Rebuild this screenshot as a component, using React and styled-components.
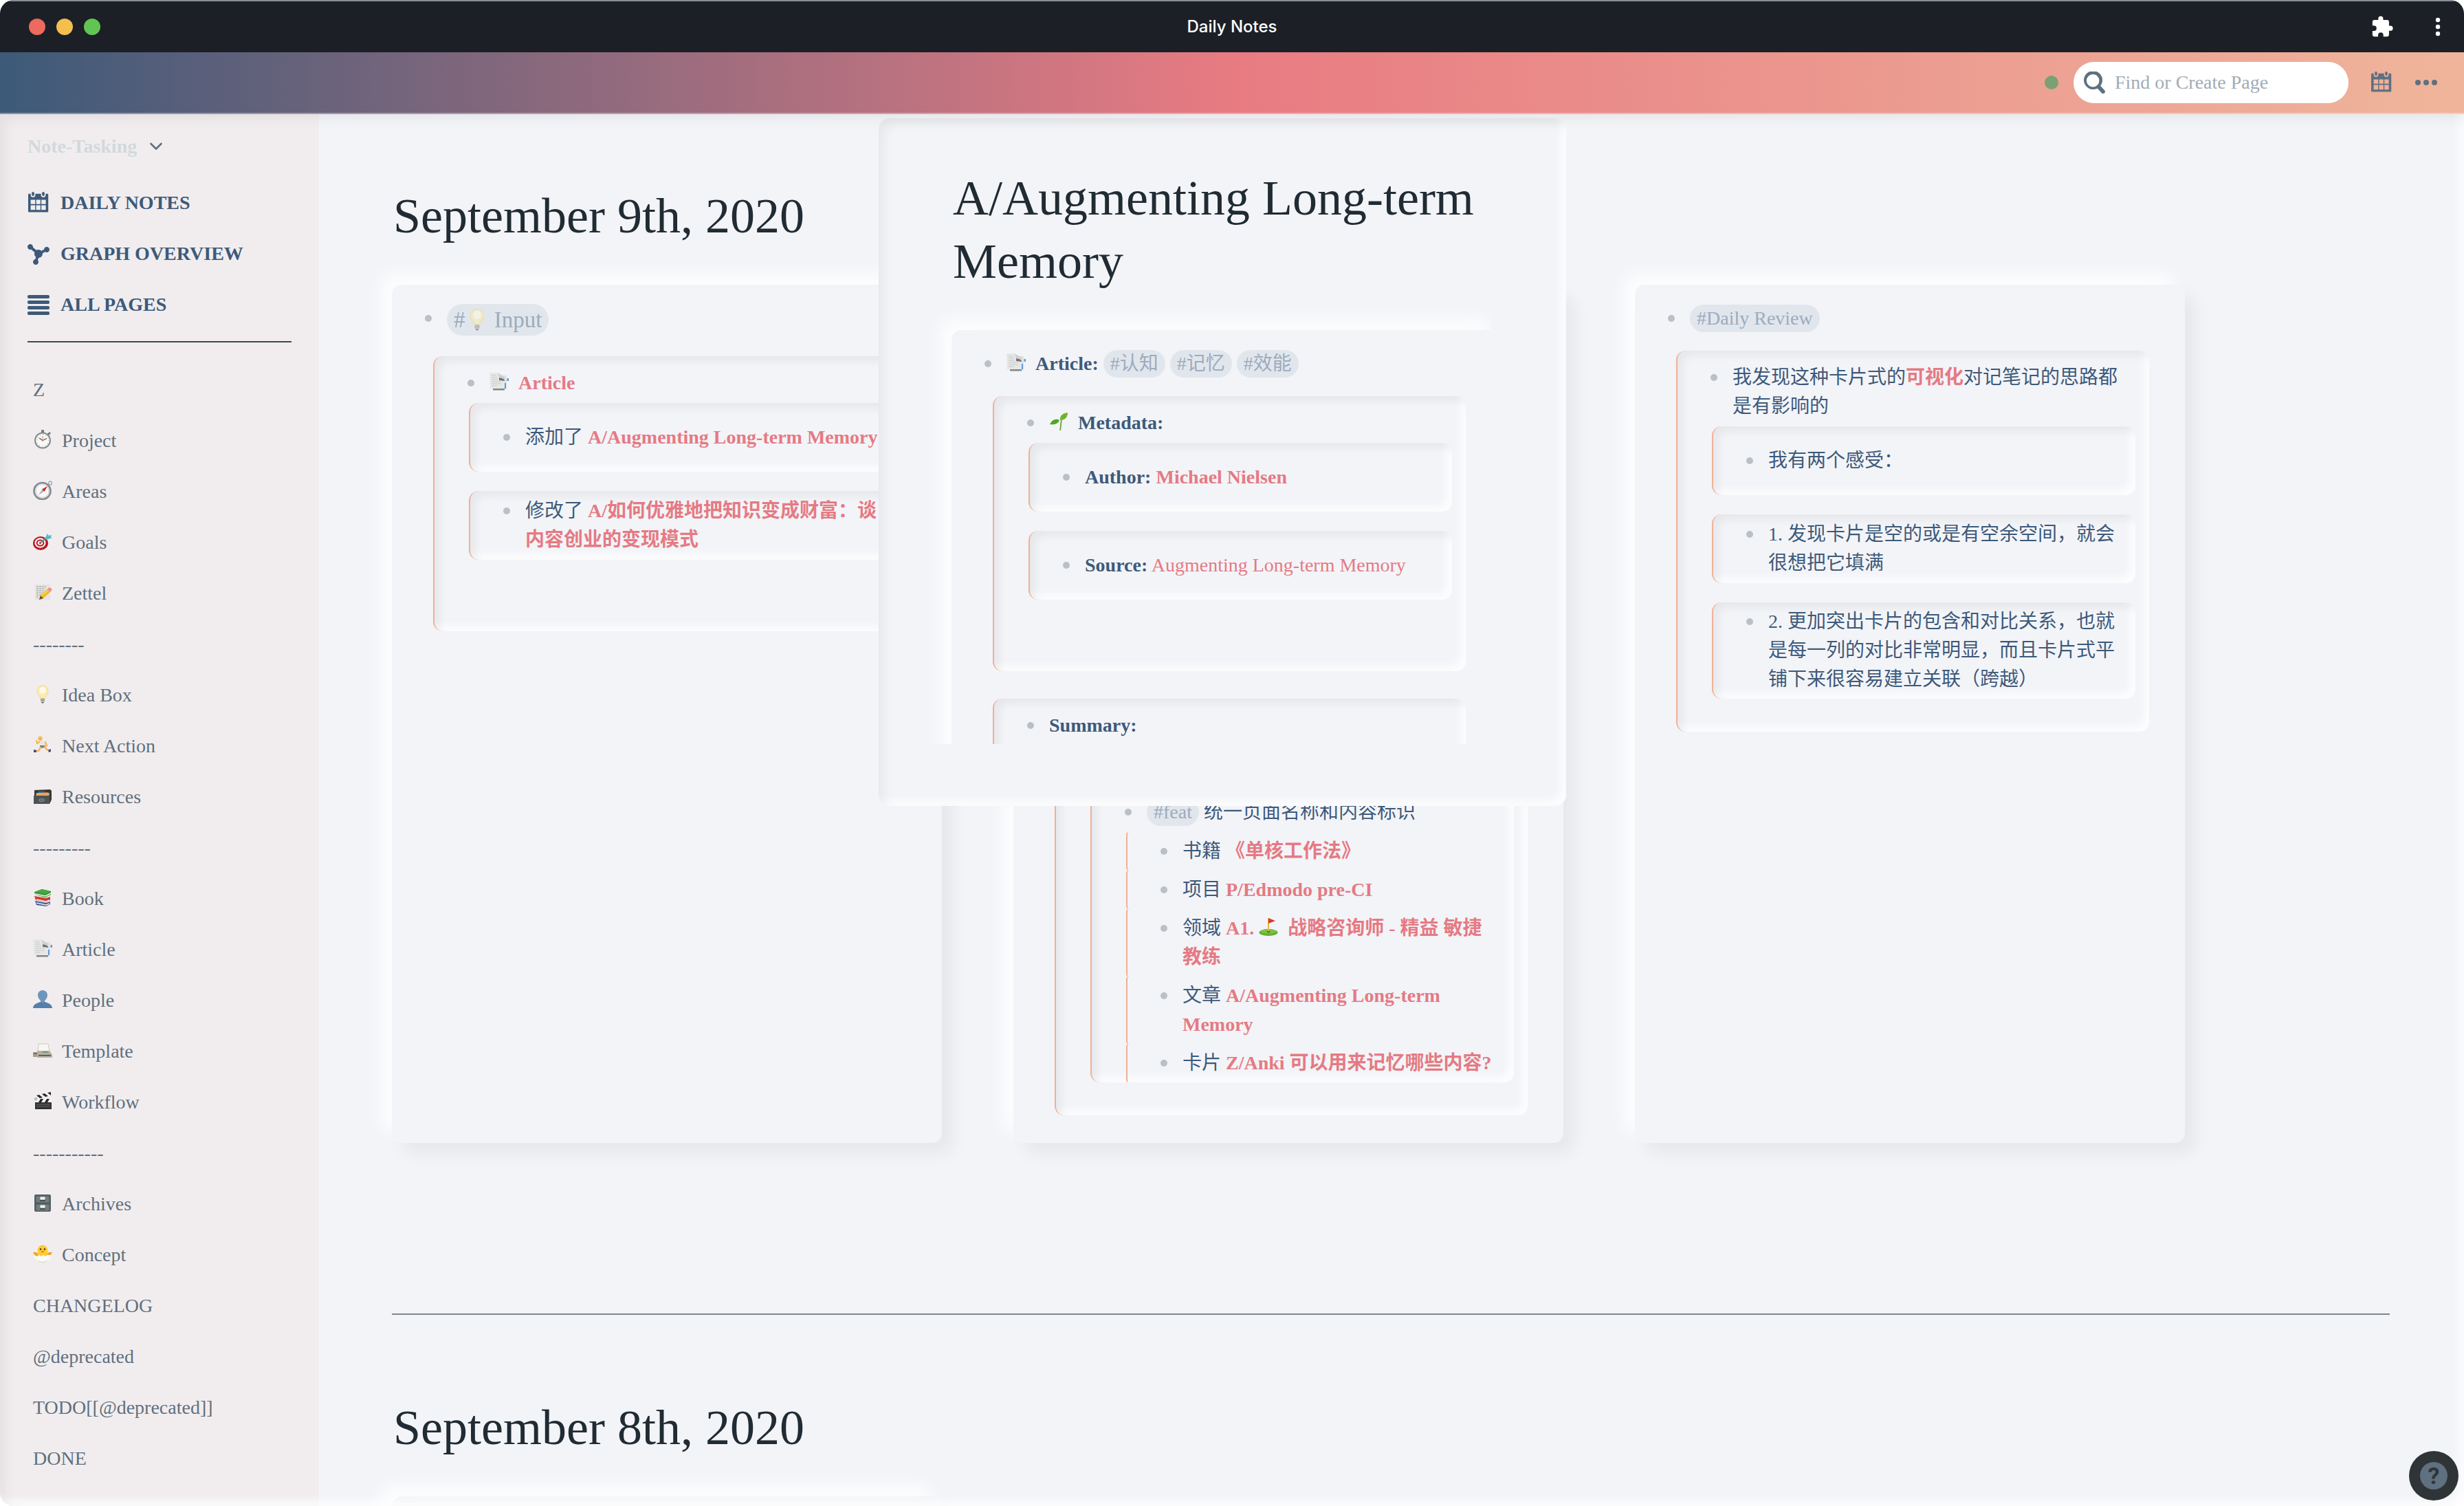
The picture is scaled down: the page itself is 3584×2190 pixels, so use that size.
import React from "react";
import styled, { createGlobalStyle, css } from "styled-components";

const c = {
  page: "#f3f4f8",
  sidebar: "#f1edee",
  ink: "#202b33",
  blue: "#3d5a7a",
  slate: "#5f7080",
  pink: "#e57a83",
  peach: "#efb096",
  bullet: "#b9c0c6",
  tag: "#e1e6ed",
  tagText: "#9dabbd",
};

const inset = css`
  box-shadow: inset 8px 8px 12px rgba(0, 0, 0, 0.05), inset -8px -8px 12px rgba(255, 255, 255, 0.8);
`;

const GlobalStyle = createGlobalStyle`
  * { box-sizing: border-box; }
  html, body { margin: 0; background: #fff; }
  body {
    font-family: "Liberation Serif", "Noto Sans CJK SC", serif;
    font-size: 28px;
    line-height: 42px;
    color: ${c.blue};
  }
  h1, h2, p, ul { margin: 0; padding: 0; }
  ul { list-style: none; }
  a { color: inherit; text-decoration: none; }
  button {
    border: 0; padding: 0; background: none; color: inherit; font: inherit;
    display: inline-flex; align-items: center; justify-content: center; cursor: pointer;
  }
`;

const Window = styled.div`
  display: flex;
  flex-direction: column;
  height: 100vh;
  overflow: hidden;
  border-radius: 20px;
  background: ${c.page};
`;

const TitleBar = styled.header`
  flex: 0 0 76px;
  display: grid;
  grid-template-columns: 1fr auto 1fr;
  align-items: center;
  padding: 0 32px;
  background: #1c2026;
  border-top: 2px solid #878e94;
  color: #fff;
  font: 500 24px/32px Inter, sans-serif;
`;

const Lights = styled.div`
  display: flex;
  gap: 16px;
  padding-left: 10px;
`;

const Light = styled.button`
  width: 24px;
  height: 24px;
  border-radius: 50%;
  background: ${(p) => p.$color};
`;

const WindowTools = styled.div`
  display: flex;
  justify-content: flex-end;
  align-items: center;
  gap: 58px;
`;

const TopBar = styled.div`
  flex: 0 0 90px;
  display: flex;
  justify-content: flex-end;
  align-items: center;
  padding: 0 38px 0 0;
  background: linear-gradient(90deg, #3d5a79, #e87b82 50%, #efb59b);
  border-bottom: 2px solid rgba(255, 255, 255, 0.35);
  background-clip: border-box;
  background-origin: border-box;
  color: ${c.slate};
`;

const Status = styled.span`
  width: 20px;
  height: 20px;
  margin-right: 22px;
  border-radius: 50%;
  background: #7ba074;
`;

const Search = styled.label`
  display: flex;
  align-items: center;
  gap: 14px;
  width: 400px;
  height: 60px;
  padding: 0 14px;
  margin-right: 32px;
  border-radius: 30px;
  background: #fff;
`;

const SearchInput = styled.input`
  flex: 1;
  min-width: 0;
  border: 0;
  padding: 0;
  outline: 0;
  background: none;
  color: ${c.ink};
  font: inherit;
  &::placeholder { color: #a2acb6; opacity: 1; }
`;

const MoreButton = styled.button`
  margin-left: 32px;
`;

const Body = styled.div`
  flex: 1;
  min-height: 0;
  display: flex;
  position: relative;
  &::after {
    content: "";
    position: absolute;
    inset: 0;
    pointer-events: none;
    border-radius: 0 0 20px 20px;
    box-shadow: inset 8px 8px 16px rgba(0, 0, 0, 0.05), inset -8px -8px 12px rgba(255, 255, 255, 0.8);
  }
`;

const Sidebar = styled.aside`
  flex: 0 0 464px;
  padding: 26px 40px 0;
  background: ${c.sidebar};
`;

const GraphName = styled.button`
  gap: 18px;
  color: #d1d9dd;
  font-weight: 700;
`;

const Nav = styled.nav`
  margin-top: 24px;
  padding-bottom: 16px;
  border-bottom: 2px solid #3c4a55;
`;

const NavLink = styled.a`
  display: flex;
  align-items: center;
  gap: 16px;
  height: 74px;
  font-weight: 700;
`;

const Starred = styled.ul`
  padding: 32px 8px 0;
  color: ${c.slate};
`;

const StarredItem = styled.li`
  height: 74px;
  line-height: 74px;
`;

const Main = styled.main`
  flex: 1;
  min-width: 0;
  position: relative;
  overflow: hidden;
  padding: 102px 108px 0 106px;
`;

const Title = styled.h1`
  padding-left: 2px;
  color: ${c.ink};
  font-size: 72px;
  line-height: 92px;
  font-weight: 400;
`;

const Day = styled.section`
  & + & {
    margin-top: 248px;
    padding-top: 118px;
    border-top: 2px solid #7f868c;
  }
`;

const Columns = styled.div`
  display: flex;
  gap: 104px;
  margin-top: 54px;
`;

const Card = styled.article`
  flex: 0 0 800px;
  display: flex;
  flex-direction: column;
  min-height: 1248px;
  padding-top: 28px;
  border-radius: 14px;
  background: ${c.page};
  box-shadow: 16px 16px 24px rgba(0, 0, 0, 0.05), -16px -16px 24px rgba(255, 255, 255, 0.85);
`;

const Row = styled.div`
  display: flex;
  align-items: flex-start;
  gap: 22px;
  padding-left: 48px;
  padding-bottom: ${(p) => (p.$head ? 26 : 0)}px;
`;

const Bullet = styled.span`
  flex: 0 0 10px;
  height: 10px;
  margin-top: 16px;
  border-radius: 50%;
  background: ${c.bullet};
`;

const Text = styled.p`
  flex: 1;
  min-width: 0;
  ${(p) => p.$large && css`font-size: 33px; line-height: 46px; padding-bottom: 4px;`}
`;

const Block = styled.div`
  display: flex;
  flex-direction: column;
  flex: ${(p) => (p.$grow ? 1 : "none")};
  min-height: 400px;
  margin: 0 52px 40px 60px;
  padding: 18px 20px 20px 0;
  border-left: 2px solid ${c.peach};
  border-radius: 14px;
  ${inset}
`;

const Inner = styled.div`
  display: flex;
  flex-direction: column;
  flex: ${(p) => (p.$grow ? 1 : "none")};
  justify-content: ${(p) => (p.$grow ? "flex-end" : "center")};
  min-height: 100px;
  margin: 0 0 28px 50px;
  padding: ${(p) => (p.$grow ? "0 20px 0 0" : "7px 20px 7px 0")};
  border-left: 2px solid ${c.peach};
  border-radius: 14px;
  ${inset}
  ${Row} + & { margin-top: 8px; }
`;

const Leaf = styled.div`
  margin-left: 50px;
  padding: 7px 0;
  border-left: 2px solid ${c.peach};
  border-radius: 4px;
  ${Row} + & { margin-top: 8px; }
`;

const Tag = styled.a`
  display: inline-block;
  padding: 0 10px;
  border-radius: 23px;
  background: ${c.tag};
  color: ${c.tagText};
  line-height: ${(p) => (p.$large ? 46 : 40)}px;
  vertical-align: ${(p) => (p.$large ? "top" : "baseline")};
  svg { opacity: 0.6; }
`;

const PageLink = styled.a`
  color: ${c.pink};
  font-weight: ${(p) => (p.$plain ? 400 : 700)};
`;

const Popup = styled.section`
  position: absolute;
  top: 6px;
  left: 814px;
  width: 1000px;
  height: 1000px;
  display: flex;
  padding: 70px 109px 90px 60px;
  border-radius: 16px;
  background: ${c.page};
  box-shadow: inset 8px 8px 16px rgba(0, 0, 0, 0.05), inset -8px -8px 12px rgba(255, 255, 255, 0.8);
`;

const PopupScroll = styled.div`
  flex: 1;
  min-width: 0;
  overflow: hidden;
  padding-left: 46px;
`;

const PopupColumns = styled(Columns)`
  width: 800px;
`;

const Help = styled.button`
  position: absolute;
  right: 8px;
  bottom: 8px;
  z-index: 1;
  width: 72px;
  height: 72px;
  border-radius: 50%;
  background: #2f3437;
`;

const HelpMark = styled.span`
  width: 40px;
  height: 40px;
  border-radius: 50%;
  background: ${c.slate};
  color: #2f3437;
  font: 700 34px/40px Roboto, sans-serif;
`;

const Glyph = styled.svg`
  width: ${(p) => p.$size || 28}px;
  height: ${(p) => p.$size || 28}px;
  flex: none;
`;

const EmojiSvg = styled.svg`
  width: 28px;
  height: 28px;
  margin-right: 14px;
  vertical-align: -3px;
`;

const emoji = {
  stopwatch: (
    <>
      <rect x="12" y="0" width="4" height="5" rx="1" fill="#777b80" />
      <path d="M22 7l3-3" stroke="#777b80" strokeWidth="3" />
      <circle cx="14" cy="15.500" r="11" fill="#f8f8f6" stroke="#85898e" strokeWidth="2" />
      <circle cx="14" cy="15.500" r="8.500" fill="none" stroke="#b5b5b5" strokeWidth="1.500" strokeDasharray="1 3.450" />
      <path d="M9 12l5 3.500 6-3" fill="none" stroke="#55585c" strokeWidth="1.300" />
      <path d="M14 17V9" stroke="#e08878" strokeWidth="1" />
    </>
  ),
  compass: (
    <>
      <circle cx="25" cy="3.500" r="2.500" fill="none" stroke="#a3a6aa" strokeWidth="1.300" />
      <circle cx="13.500" cy="15" r="12" fill="#eceeee" stroke="#84898f" strokeWidth="2.600" />
      <circle cx="13.500" cy="15" r="9.500" fill="#f7f8f8" stroke="#cdd0d2" />
      <path d="M8 21l5.500-8 2 2.500z" fill="#a2a6a9" />
      <path d="M21 8l-8 4.500 3.500 3.500z" fill="#dc2222" />
    </>
  ),
  target: (
    <>
      <ellipse cx="11" cy="17" rx="11" ry="10" fill="#b51c22" />
      <ellipse cx="10.500" cy="16.500" rx="8" ry="7.200" fill="#fff" />
      <ellipse cx="10.500" cy="16.500" rx="6" ry="5.200" fill="#c8242a" />
      <ellipse cx="10.500" cy="16.500" rx="3.700" ry="3" fill="#fff" />
      <circle cx="10.500" cy="16.500" r="1.600" fill="#c8242a" />
      <path d="M11 16l10-8" stroke="#36a4b1" strokeWidth="2" />
      <path d="M18 9l3-6 2 3 4-1-1 3 2 1-6 2-3 1z" fill="#4dbfcb" />
    </>
  ),
  memo: (
    <>
      <path d="M3 3h22v23H3z" fill="#e5e4e3" />
      <path d="M5 6h14M5 9h13M5 12h11M5 15h9M5 18h6M5 21h4" stroke="#9a9a9a" strokeDasharray="3 1" />
      <path d="M9 25l2-7L22 9l4 4-11 10z" fill="#f0b928" />
      <path d="M12 20L23 11" stroke="#fbd960" strokeWidth="1.500" />
      <path d="M9 25l2-6 4 4z" fill="#66512e" />
      <path d="M21 10l3-3 4 3-3 4z" fill="#ed8e96" />
    </>
  ),
  bulb: (
    <>
      <path d="M14 2a8 8 0 0 0-8 8c0 5 5 7 5 12h6c0-5 5-7 5-12a8 8 0 0 0-8-8z" fill="#fbedb0" stroke="#ecd98b" />
      <ellipse cx="14" cy="9" rx="4.500" ry="5" fill="#fffbe6" />
      <rect x="11" y="20.500" width="6" height="5" rx="1.500" fill="#a5a5a1" />
      <path d="M12 26h4l-1 1.500h-2z" fill="#555" />
    </>
  ),
  runner: (
    <>
      <circle cx="10.500" cy="5" r="3.200" fill="#f7ba4d" />
      <path d="M9 9l6-1 4 4-2 6-7-1z" fill="#e6e6e3" />
      <path d="M9 10l-3 2-1-4M18 10l2 5-4 2" fill="none" stroke="#f2b45a" strokeWidth="2.200" strokeLinecap="round" />
      <path d="M10 15h7l1 3-8 1z" fill="#777a7e" />
      <path d="M11 18l-3 5-5 0M17 17l3 4 4 1" fill="none" stroke="#f4b75c" strokeWidth="2.600" strokeLinecap="round" />
      <path d="M1 21l4 1v3H1zM22 22l4-2v4l-3 1z" fill="#3d4f86" />
    </>
  ),
  cardbox: (
    <>
      <path d="M2 6l23-1 2 2v13l-3 6H2z" fill="#35383a" />
      <path d="M5 10h19l-1 5H4z" fill="#e0aa5c" />
      <path d="M8 8h9v2H8z" fill="#416ca8" />
      <path d="M16 9h6v1h-6z" fill="#c95d38" />
      <path d="M1 14h23v12H1z" fill="#4e5254" />
      <rect x="9" y="19" width="7" height="3" rx="1" fill="none" stroke="#a0a3a4" />
    </>
  ),
  books: (
    <>
      <path d="M3 19l16 3 6-2v4l-6 3-14-2z" fill="#3f5799" />
      <path d="M5 22l14 3 5-2" fill="none" stroke="#eee" strokeWidth="1.500" />
      <path d="M2 12l17 3 6-2v5l-6 3-15-3z" fill="#cf3b2e" />
      <path d="M5 17l14 3 5-2" fill="none" stroke="#f2e5dd" strokeWidth="1.500" />
      <path d="M2 6l11-4 13 3v5l-8 4L3 10z" fill="#379539" />
      <path d="M3 9l15 3 8-4" fill="none" stroke="#eef3e8" strokeWidth="1.500" />
      <path d="M3 6l10-4 13 3-8 4z" fill="#46a846" />
    </>
  ),
  pages: (
    <>
      <path d="M9 4l16 1v20H9z" fill="#e2e2e2" />
      <path d="M5 24h17v2.500H5z" fill="#858585" />
      <path d="M0 1h12l3 4v6l7 2v11H1z" fill="#e6e7e6" />
      <path d="M14 8l6 1 2 3v1l-8-1z" fill="#707271" />
      <path d="M12 1l3 2 7 4v4l-4-2-4-1z" fill="#cfd0cf" />
      <path d="M3 5h7M3 8h8M3 11h9M3 14h14M3 17h14M3 20h8" stroke="#c8cacb" />
      <path d="M25.500 9H28v4h-2.500z" fill="#5b9bdd" />
      <path d="M22 16h2v8h-2z" fill="#5b9bdd" />
    </>
  ),
  person: (
    <>
      <path d="M14 1c-4 0-7 3-7 7 0 3 1.500 6 4 8v2c-3 1.500-10 2-11 9h28c-1-7-8-7.500-11-9v-2c2.500-2 4-5 4-8 0-4-3-7-7-7z" fill="#6d96bd" />
      <path d="M11 18c-3 1.500-10 2-11 9h28c-1-7-8-7.500-11-9-1 1.500-5 1.500-6 0z" fill="#5580ab" />
    </>
  ),
  fax: (
    <>
      <path d="M8 5h14l2 11H7z" fill="#f7f6f2" stroke="#ccc8bd" />
      <path d="M6 15h18l4 6v4H6z" fill="#b7b0a1" />
      <path d="M0 17h6v7H0z" fill="#a59e90" />
      <path d="M1 18h5v2H1z" fill="#746f66" />
      <path d="M14 16h8v2h-8z" fill="#6f9b86" />
      <path d="M8 21h18v1.500H8z" fill="#4a463f" />
    </>
  ),
  clapper: (
    <>
      <path d="M3 13h24v13H3z" fill="#303233" />
      <path d="M1 7L25 1l1 5L2 12z" fill="#f4f4f4" />
      <path d="M5 6l5 4 4-1-5-4zM13 4l5 4 4-1-5-4zM21 2l5 4V1z" fill="#252728" />
      <path d="M3 11h25v5H3z" fill="#f4f4f4" />
      <path d="M8 16l3-5h4l-3 5zM17 16l3-5h4l-3 5z" fill="#252728" />
      <path d="M5 19h20M5 22h20" stroke="#6a6d6e" />
      <circle cx="4" cy="11" r="2.500" fill="#bfc1c2" />
    </>
  ),
  cabinet: (
    <>
      <rect x="2" y="2" width="24" height="25" rx="2" fill="#596469" />
      <path d="M4 4h20v10H4zM4 16h20v10H4z" fill="#727d81" stroke="#4c565a" />
      <path d="M10.500 5.500h7v4h-7zM10.500 17.500h7v4h-7z" fill="#eff1ef" />
      <path d="M10 11h8M10 23h8" stroke="#394145" strokeWidth="1.500" />
    </>
  ),
  chick: (
    <>
      <path d="M0 12l5 0 4 4h10l4-4 5 0-4 7H4z" fill="#f3a329" />
      <circle cx="14" cy="9" r="7.500" fill="#fbcb38" />
      <path d="M7 12h14v7H7z" fill="#fbcb38" />
      <circle cx="11" cy="7.500" r="1.200" fill="#473117" />
      <circle cx="17" cy="7.500" r="1.200" fill="#473117" />
      <path d="M11.500 10h5L14 13z" fill="#ec7f24" />
      <path d="M2 16l4 2 3-2 3 2 3-2 3 2 3-2 5 0c0 7-5 11-12 11S2 23 2 16z" fill="#fafaf6" />
      <path d="M5 22c3 5 15 5 18 0-1 3-5 5-9 5s-8-2-9-5z" fill="#d8d6cf" />
    </>
  ),
  seedling: (
    <>
      <path d="M16 27c1-5 1-11 2-15" fill="none" stroke="#6ba53a" strokeWidth="1.800" />
      <path d="M16 12C15 6 19 2 27 1c0 6-3 11-11 11z" fill="#6fb52c" />
      <path d="M15 12c-4-3-11-1-14 6 5 1 12 0 14-6z" fill="#53a424" />
    </>
  ),
  golf: (
    <>
      <ellipse cx="14" cy="22" rx="13.500" ry="5" fill="#65ad34" />
      <ellipse cx="14" cy="20.500" rx="12" ry="3" fill="#7cc244" />
      <path d="M14 1v20" stroke="#e8b838" strokeWidth="2" />
      <path d="M14 1l10 4-10 4z" fill="#d93a2f" />
      <ellipse cx="14" cy="21" rx="2.500" ry="1" fill="#3c6d1c" />
    </>
  ),
};

const Emoji = ({ name }) => (
  <EmojiSvg viewBox="0 0 28 28" aria-hidden="true">{emoji[name]}</EmojiSvg>
);

const TagBulb = styled(EmojiSvg)`
  width: 34px;
  height: 34px;
  margin-right: 0;
  vertical-align: -5px;
`;

const BulbInTag = () => (
  <TagBulb viewBox="0 0 28 28" aria-hidden="true">{emoji.bulb}</TagBulb>
);

const CalendarIcon = () => (
  <Glyph $size={32} viewBox="0 0 16 16" fill="currentColor" aria-hidden="true">
    <path fillRule="evenodd" d="M4 0c.5 0 .9.4.9.9v1.200a.9.9 0 0 1-1.800 0V.9C3.100.4 3.500 0 4 0zM11.500 0c.5 0 .9.4.9.9v1.200a.9.9 0 0 1-1.800 0V.9c0-.5.4-.9.9-.9zM14.500 1.400h-1.300v.8a1.700 1.700 0 0 1-3.400 0v-.8H5.700v.8a1.700 1.700 0 0 1-3.400 0v-.8H1.100c-.3 0-.6.3-.6.6v12c0 .5.3.8.8.8h13c.5 0 .8-.3.8-.8V2c0-.3-.3-.6-.6-.6zM5.600 13.100H2.300V9.700h3.300v3.400zm0-4.200H2.300V5.700h3.300v3.200zm3.800 4.200H6.300V9.700h3.100v3.400zm0-4.200H6.300V5.700h3.100v3.200zm3.900 4.200h-3.200V9.700h3.200v3.400zm0-4.200h-3.200V5.700h3.200v3.200z" />
  </Glyph>
);

const GraphIcon = () => (
  <Glyph $size={32} viewBox="0 0 16 16" fill="currentColor" aria-hidden="true">
    <path d="M14 3c-1.060 0-1.920.83-1.990 1.880l-1.930.97A2.950 2.950 0 0 0 8 5c-.56 0-1.080.16-1.520.43L3.970 3.340C3.980 3.230 4 3.120 4 3c0-1.100-.9-2-2-2s-2 .9-2 2 .9 2 2 2c.24 0 .47-.05.68-.13l2.510 2.090C5.080 7.290 5 7.630 5 8c0 .96.46 1.810 1.160 2.350l-.56 1.690c-.91.19-1.600.99-1.600 1.960 0 1.100.9 2 2 2s2-.9 2-2c0-.51-.2-.97-.51-1.320l.56-1.690A2.990 2.990 0 0 0 11 8c0-.12-.02-.24-.04-.36l1.940-.97c.32.2.69.33 1.100.33 1.100 0 2-.9 2-2s-.9-2-2-2z" />
  </Glyph>
);

const PagesIcon = () => (
  <Glyph $size={32} viewBox="0 0 32 32" fill="currentColor" aria-hidden="true">
    {[2, 10, 18, 26].map((y) => (
      <rect key={y} x="0" y={y} width="32" height="5" rx="2" />
    ))}
  </Glyph>
);

const SearchIcon = () => (
  <Glyph $size={32} viewBox="0 0 18 18" fill={c.slate} aria-hidden="true">
    <path d="M17.500 15.300l-3.300-3.600a7.600 7.600 0 1 0-2.500 2.100l3.300 3.700a1.600 1.600 0 0 0 2.500-2.200zM8 12.700A5.200 5.200 0 1 1 8 2.300a5.200 5.200 0 0 1 0 10.400z" />
  </Glyph>
);

const ChevronIcon = () => (
  <Glyph $size={20} viewBox="0 0 20 20" fill="none" stroke={c.slate} strokeWidth="2.600" strokeLinecap="round" strokeLinejoin="round" aria-hidden="true">
    <path d="M2.500 6L10 13.500 17.500 6" />
  </Glyph>
);

const PuzzleIcon = () => (
  <Glyph $size={34} viewBox="0 0 24 24" fill="currentColor" aria-hidden="true">
    <path d="M20.500 11H19V7a2 2 0 0 0-2-2h-4V3.500a2.500 2.500 0 0 0-5 0V5H4a2 2 0 0 0-2 2v3.800h1.500a2.700 2.700 0 0 1 0 5.400H2V20a2 2 0 0 0 2 2h3.800v-1.500a2.700 2.700 0 0 1 5.400 0V22H17a2 2 0 0 0 2-2v-4h1.500a2.500 2.500 0 0 0 0-5z" />
  </Glyph>
);

const KebabIcon = () => (
  <svg width="12" height="28" viewBox="0 0 12 28" fill="currentColor" aria-hidden="true">
    <circle cx="6" cy="4" r="3.200" />
    <circle cx="6" cy="14" r="3.200" />
    <circle cx="6" cy="24" r="3.200" />
  </svg>
);

const MoreIcon = () => (
  <svg width="34" height="10" viewBox="0 0 34 10" fill="currentColor" aria-hidden="true">
    <circle cx="5" cy="5" r="4" />
    <circle cx="17" cy="5" r="4" />
    <circle cx="29" cy="5" r="4" />
  </svg>
);

const starred = [
  ["", "Z"],
  ["stopwatch", "Project"],
  ["compass", "Areas"],
  ["target", "Goals"],
  ["memo", "Zettel"],
  ["", "--------"],
  ["bulb", "Idea Box"],
  ["runner", "Next Action"],
  ["cardbox", "Resources"],
  ["", "---------"],
  ["books", "Book"],
  ["pages", "Article"],
  ["person", "People"],
  ["fax", "Template"],
  ["clapper", "Workflow"],
  ["", "-----------"],
  ["cabinet", "Archives"],
  ["chick", "Concept"],
  ["", "CHANGELOG"],
  ["", "@deprecated"],
  ["", "TODO[[@deprecated]]"],
  ["", "DONE"],
];

const Item = ({ head, large, children }) => (
  <Row $head={head}>
    <Bullet />
    <Text $large={large}>{children}</Text>
  </Row>
);

const Link = (props) => <PageLink href="#" {...props} />;

export default function App() {
  return (
    <>
      <GlobalStyle />
      <Window lang="zh-CN">
        <TitleBar>
          <Lights>
            <Light $color="#ec6a5e" aria-label="Close" />
            <Light $color="#f4bf4f" aria-label="Minimize" />
            <Light $color="#61c554" aria-label="Zoom" />
          </Lights>
          <span>Daily Notes</span>
          <WindowTools>
            <button aria-label="Extensions"><PuzzleIcon /></button>
            <button aria-label="Menu"><KebabIcon /></button>
          </WindowTools>
        </TitleBar>
        <TopBar>
          <Status />
          <Search>
            <SearchIcon />
            <SearchInput type="text" aria-label="Find or Create Page" placeholder="Find or Create Page" />
          </Search>
          <button aria-label="Calendar"><CalendarIcon /></button>
          <MoreButton aria-label="More"><MoreIcon /></MoreButton>
        </TopBar>
        <Body>
          <Sidebar>
            <GraphName>Note-Tasking <ChevronIcon /></GraphName>
            <Nav>
              <NavLink href="#"><CalendarIcon />DAILY NOTES</NavLink>
              <NavLink href="#"><GraphIcon />GRAPH OVERVIEW</NavLink>
              <NavLink href="#"><PagesIcon />ALL PAGES</NavLink>
            </Nav>
            <Starred>
              {starred.map(([icon, label]) => (
                <StarredItem key={label}>
                  <a href="#">{icon && <Emoji name={icon} />}{label}</a>
                </StarredItem>
              ))}
            </Starred>
          </Sidebar>
          <Main>
            <Day>
              <Title>September 9th, 2020</Title>
              <Columns>
                <Card>
                  <Item head large><Tag href="#" $large>#<BulbInTag /> Input</Tag></Item>
                  <Block>
                    <Item><Emoji name="pages" /><Link>Article</Link></Item>
                    <Inner>
                      <Item>添加了 <Link>A/Augmenting Long-term Memory</Link></Item>
                    </Inner>
                    <Inner>
                      <Item>修改了 <Link>A/如何优雅地把知识变成财富：谈内容创业的变现模式</Link></Item>
                    </Inner>
                  </Block>
                </Card>
                <Card>
                  <Block $grow>
                    <Inner $grow>
                      <Item><Tag href="#">#feat</Tag> 统一页面名称和内容标识</Item>
                      <Leaf><Item>书籍 <Link>《单核工作法》</Link></Item></Leaf>
                      <Leaf><Item>项目 <Link>P/Edmodo pre-CI</Link></Item></Leaf>
                      <Leaf><Item>领域 <Link>A1. <Emoji name="golf" />战略咨询师 - 精益 敏捷教练</Link></Item></Leaf>
                      <Leaf><Item>文章 <Link>A/Augmenting Long-term Memory</Link></Item></Leaf>
                      <Leaf><Item>卡片 <Link>Z/Anki 可以用来记忆哪些内容?</Link></Item></Leaf>
                    </Inner>
                  </Block>
                </Card>
                <Card>
                  <Item head><Tag href="#">#Daily Review</Tag></Item>
                  <Block>
                    <Item>我发现这种卡片式的<Link>可视化</Link>对记笔记的思路都是有影响的</Item>
                    <Inner><Item>我有两个感受：</Item></Inner>
                    <Inner><Item>1. 发现卡片是空的或是有空余空间，就会很想把它填满</Item></Inner>
                    <Inner><Item>2. 更加突出卡片的包含和对比关系，也就是每一列的对比非常明显，而且卡片式平铺下来很容易建立关联（跨越）</Item></Inner>
                  </Block>
                </Card>
              </Columns>
            </Day>
            <Day>
              <Title>September 8th, 2020</Title>
              <Columns>
                <Card />
              </Columns>
            </Day>
            <Popup aria-label="Page preview">
              <PopupScroll>
                <Title as="h2">A/Augmenting Long-term Memory</Title>
                <PopupColumns>
                  <Card>
                    <Item head>
                      <Emoji name="pages" /><b>Article:</b> <Tag href="#">#认知</Tag> <Tag href="#">#记忆</Tag> <Tag href="#">#效能</Tag>
                    </Item>
                    <Block>
                      <Item><Emoji name="seedling" /><b>Metadata:</b></Item>
                      <Inner><Item><b>Author:</b> <Link>Michael Nielsen</Link></Item></Inner>
                      <Inner><Item><b>Source:</b> <Link $plain>Augmenting Long-term Memory</Link></Item></Inner>
                    </Block>
                    <Block>
                      <Item><b>Summary:</b></Item>
                    </Block>
                  </Card>
                </PopupColumns>
              </PopupScroll>
            </Popup>
          </Main>
          <Help aria-label="Help"><HelpMark>?</HelpMark></Help>
        </Body>
      </Window>
    </>
  );
}
